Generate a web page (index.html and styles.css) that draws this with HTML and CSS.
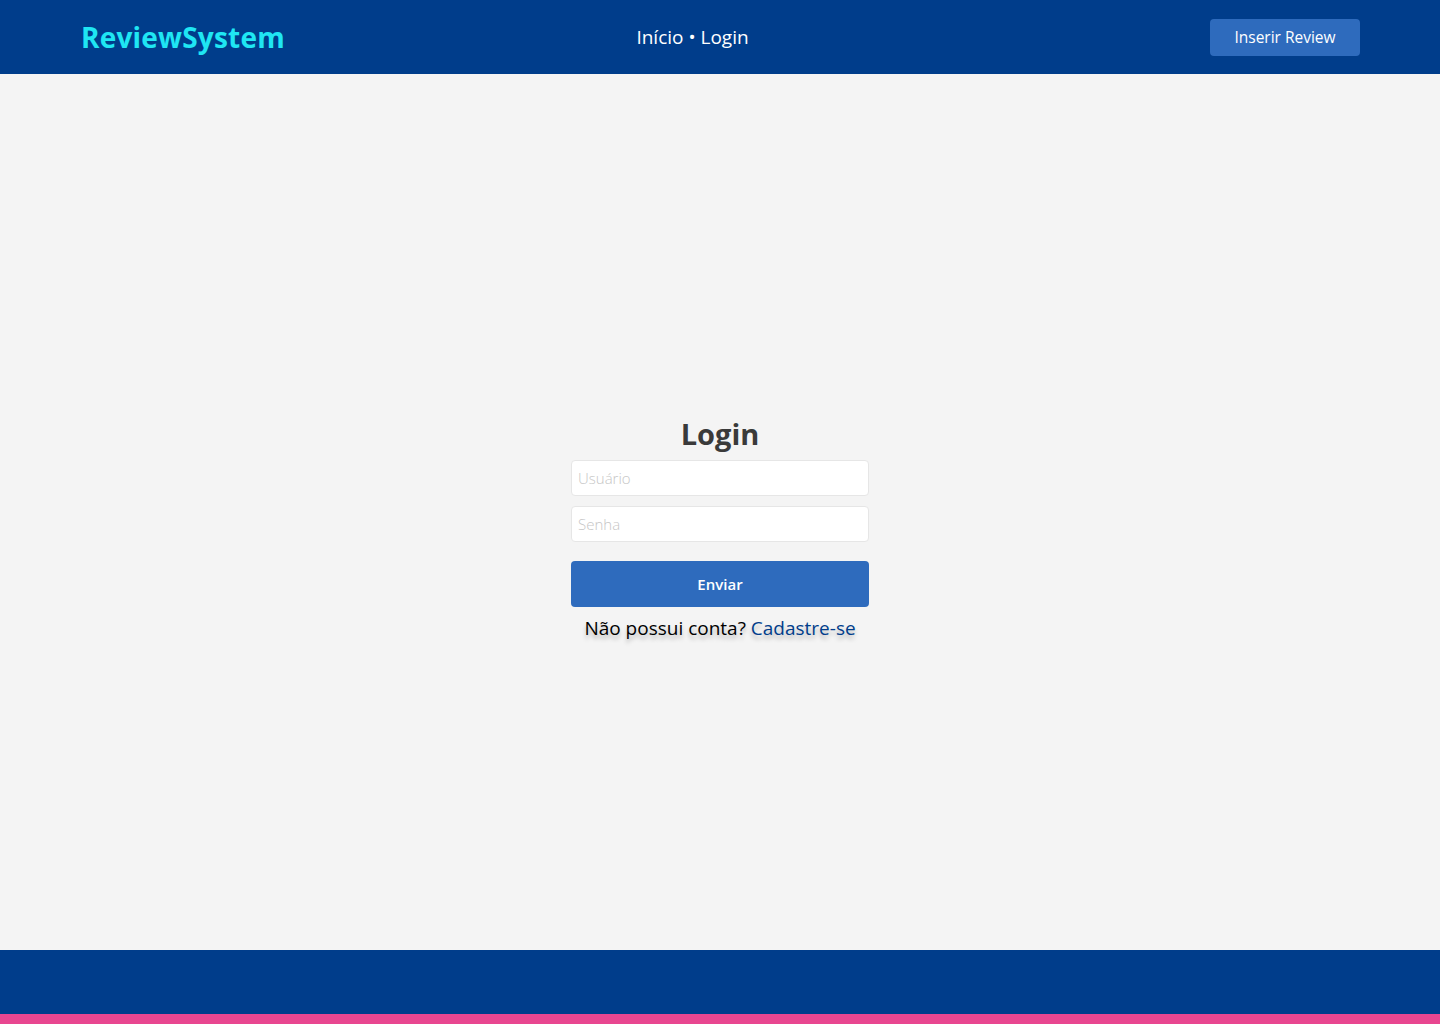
FILE: index.html
```html
<!DOCTYPE html>
<html lang="pt-BR">
<head>
<meta charset="utf-8">
<title>ReviewSystem - Login</title>
<link rel="stylesheet" href="styles.css">
</head>
<body>
<header class="topbar">
  <a class="logo" href="#">ReviewSystem</a>
  <nav class="crumbs">Início • Login</nav>
  <a class="btn-insert" href="#">Inserir Review</a>
</header>
<main class="main">
  <form class="login">
    <h2 class="login-title">Login</h2>
    <input class="field" type="text" placeholder="Usuário">
    <input class="field" type="password" placeholder="Senha">
    <button class="submit" type="button">Enviar</button>
    <p class="signup">Não possui conta? <a href="#">Cadastre-se</a></p>
  </form>
</main>
<footer class="footer"></footer>
<div class="stripe"></div>
</body>
</html>
```
FILE: styles.css
```css
* { box-sizing: border-box; }
html, body { margin: 0; padding: 0; }
body {
  font-family: "Open Sans", "Noto Sans", sans-serif;
  background: #f4f4f4;
  display: flex;
  flex-direction: column;
  min-height: 1024px;
}
.topbar {
  height: 74px;
  background: #003d8b;
  display: grid;
  grid-template-columns: 1fr auto 1fr;
  align-items: center;
  padding: 0 80px 0 81px;
}
.logo {
  color: #1fe6f3;
  font-weight: 700;
  font-size: 28px;
  text-decoration: none;
  justify-self: start;
  letter-spacing: 0.2px;
}
.crumbs {
  color: #ffffff;
  font-size: 19px;
  margin-left: -56px;
}
.btn-insert {
  justify-self: end;
  width: 150px;
  height: 37px;
  background: #2e6bbd;
  color: #fff;
  border-radius: 4px;
  font-size: 15.5px;
  text-decoration: none;
  display: flex;
  align-items: center;
  justify-content: center;
}
.main {
  flex: 1;
  display: flex;
  align-items: center;
  justify-content: center;
  padding-top: 33px;
}
.login {
  width: 298px;
  display: flex;
  flex-direction: column;
  align-items: stretch;
}
.login-title {
  margin: 0 0 8px;
  text-align: center;
  font-size: 29px;
  line-height: 36px;
  font-weight: 700;
  color: #3a3a3a;
}
.field {
  height: 36px;
  border: 1px solid #e6e6e6;
  border-radius: 4px;
  background: #fff;
  padding: 0 6px;
  font-family: inherit;
  font-size: 15px;
  margin-bottom: 10px;
  color: #333;
}
.field::placeholder { color: #c6c6c6; font-weight: 300; }
.submit {
  margin-top: 9px;
  height: 46px;
  border: none;
  border-radius: 4px;
  background: #2e6bbd;
  color: #fff;
  font-family: inherit;
  font-weight: 600;
  font-size: 15px;
}
.signup {
  margin: 8px -20px 0;
  text-align: center;
  font-size: 19px;
  line-height: 26px;
  color: #000;
  text-shadow: 0 4px 4px rgba(0,0,0,0.25);
}
.signup a { color: #003d8b; text-decoration: none; }
.footer {
  height: 64px;
  background: #003d8b;
}
.stripe {
  height: 10px;
  background: #e84690;
}
```
